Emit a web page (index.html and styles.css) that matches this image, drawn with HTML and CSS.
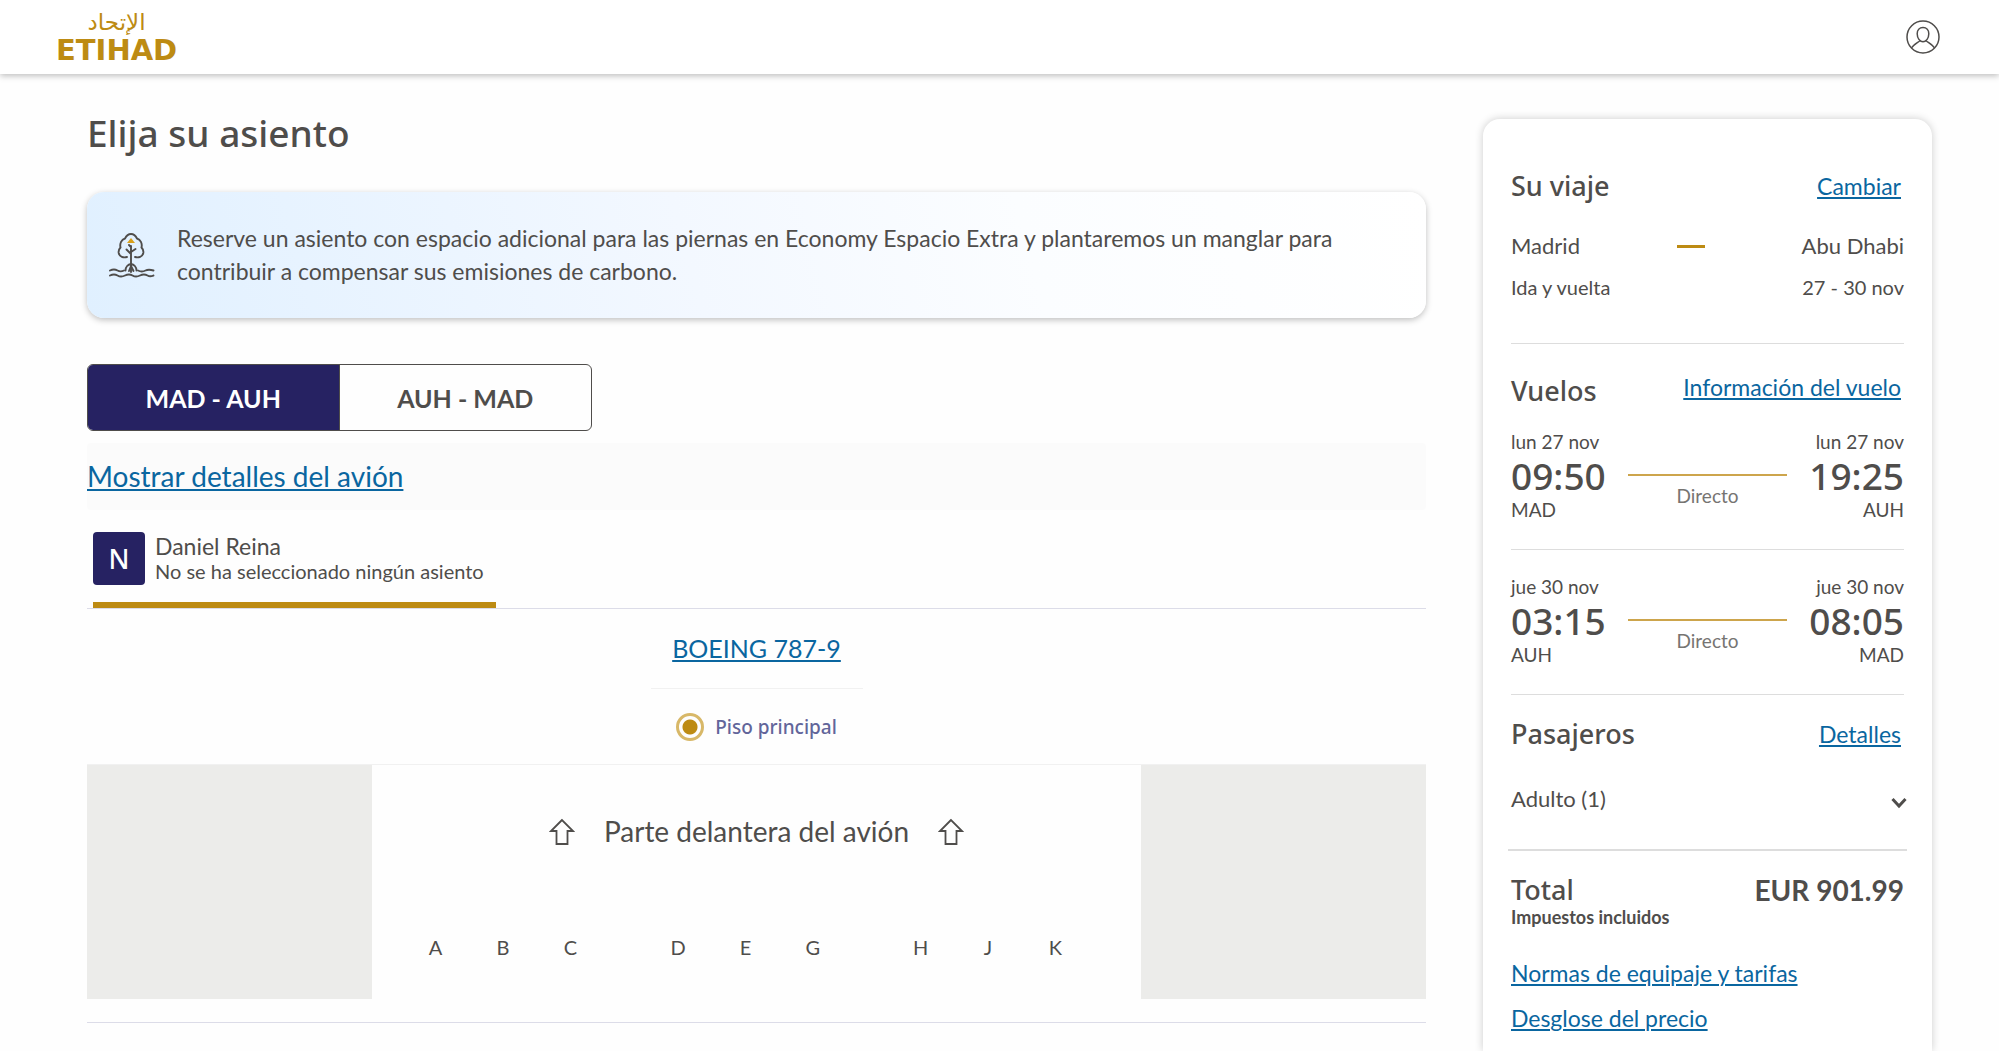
FILE: index.html
```html
<!DOCTYPE html>
<html lang="es">
<head>
<meta charset="utf-8">
<meta name="viewport" content="width=device-width, initial-scale=1">
<title>Elija su asiento | Etihad</title>
<link rel="stylesheet" href="styles.css">
</head>
<body>
<header class="topbar">
  <a class="logo" href="#" aria-label="Etihad">
    <span class="logo-ar" lang="ar" dir="rtl">الإتحاد</span>
    <span class="logo-en">ETIHAD</span>
  </a>
  <button class="account" type="button" aria-label="Mi cuenta">
    <svg width="34" height="34" viewBox="0 0 34 34" fill="none" stroke="currentColor" stroke-width="1.5" aria-hidden="true">
      <circle cx="17" cy="17" r="16"/>
      <path d="M17 7.5c-3.6 0-5.8 2.700-5.800 6.300 0 4.200 2.600 8 5.800 8s5.800-3.800 5.800-8c0-3.600-2.200-6.300-5.800-6.300z"/>
      <path d="M5.500 28c1.800-3.200 5.600-5 8.700-7.500M28.500 28c-1.800-3.200-5.600-5-8.700-7.500"/>
    </svg>
  </button>
</header>

<main class="page">
  <section class="seats">
    <h1 class="title">Elija su asiento</h1>

    <div class="banner">
      <svg class="banner-icon" width="46" height="46" viewBox="0 0 46 46" fill="none" stroke="#4f4d4b" stroke-width="1.900" stroke-linecap="round" aria-hidden="true">
        <path d="M18 25c-3.500 1-7.500 0-8.300-4-.4-2.500.8-4.500 1.800-5.500-1-4 1-8 4.500-9 1.500-3 4-4.500 6-4.500s4.500 1.500 6 4.500c3.500 1 5.500 5 4.500 9 1 1 2.200 3 1.800 5.500-.8 4-4.800 5-8.300 4"/>
        <path d="M22 40V14M22 22l-4.500-4.500M22 20l4.500-3M22 15l-2-2"/>
        <path d="M22 32c-3 .5-5.500 3-5.500 6.500M22 32c3 .5 5.500 3 5.500 6.500M22 34l-2 5M22 34l2.500 5"/>
        <path d="M1 38.500c3-1.500 5-1.500 7.500 0s4.500 1 6.500 0M29 38.500c3 1.500 5 1.300 7.500 0s5-1 8 0"/>
        <path d="M1 43.500c3-1.500 5-1.500 7.500 0s5 1.300 7.500 0 5-1.500 7.500 0 5 1.300 7.500 0 5-1.500 7.500 0 4 .8 6 0"/>
        <path d="M22 6l4 5h-8z" fill="#d9a11c" stroke="none"/>
      </svg>
      <p class="banner-text">Reserve un asiento con espacio adicional para las piernas en Economy Espacio Extra y plantaremos un manglar para contribuir a compensar sus emisiones de carbono.</p>
    </div>

    <div class="legs">
      <button class="leg leg-on" type="button" aria-pressed="true">MAD - AUH</button>
      <button class="leg" type="button" aria-pressed="false">AUH - MAD</button>
    </div>

    <div class="plane-details"><a class="link" href="#">Mostrar detalles del avión</a></div>

    <div class="passengers">
      <div class="passenger">
        <span class="avatar">N</span>
        <div>
          <div class="passenger-name">Daniel Reina</div>
          <div class="passenger-seat">No se ha seleccionado ningún asiento</div>
        </div>
      </div>
    </div>

    <div class="model"><a class="link" href="#">BOEING 787-9</a></div>
    <div class="deck">
      <input class="radio" type="radio" id="deck-main" name="deck" checked>
      <label for="deck-main">Piso principal</label>
    </div>

    <div class="cabin">
      <div class="cabin-map">
        <div class="front">
          <svg width="26" height="28" viewBox="0 0 26 28" fill="none" stroke="currentColor" stroke-width="1.800" aria-hidden="true"><path d="M13 2L2 13h5.500v13h11V13H24z"/></svg>
          <span>Parte delantera del avión</span>
          <svg width="26" height="28" viewBox="0 0 26 28" fill="none" stroke="currentColor" stroke-width="1.800" aria-hidden="true"><path d="M13 2L2 13h5.500v13h11V13H24z"/></svg>
        </div>
        <div class="letters">
          <span>A</span><span>B</span><span>C</span><i></i>
          <span>D</span><span>E</span><span>G</span><i></i>
          <span>H</span><span>J</span><span>K</span>
        </div>
      </div>
    </div>
  </section>

  <aside class="summary">
    <section class="block trip">
      <div class="head">
        <h2>Su viaje</h2>
        <a class="link" href="#">Cambiar</a>
      </div>
      <div class="cities"><span>Madrid</span><span class="dash"></span><span>Abu Dhabi</span></div>
      <div class="dates"><span>Ida y vuelta</span><span>27 - 30 nov</span></div>
    </section>

    <section class="block flights">
      <div class="head head-top">
        <h2>Vuelos</h2>
        <a class="link" href="#">Información del vuelo</a>
      </div>
      <div class="flight">
        <div><div>lun 27 nov</div><div class="time">09:50</div><div>MAD</div></div>
        <div class="route"><span class="route-line"></span><span>Directo</span></div>
        <div class="arrive"><div>lun 27 nov</div><div class="time">19:25</div><div>AUH</div></div>
      </div>
    </section>

    <section class="block second">
      <div class="flight">
        <div><div>jue 30 nov</div><div class="time">03:15</div><div>AUH</div></div>
        <div class="route"><span class="route-line"></span><span>Directo</span></div>
        <div class="arrive"><div>jue 30 nov</div><div class="time">08:05</div><div>MAD</div></div>
      </div>
    </section>

    <section class="travellers">
      <div class="head">
        <h2>Pasajeros</h2>
        <a class="link" href="#">Detalles</a>
      </div>
      <button class="adult" type="button" aria-expanded="false">
        <span>Adulto (1)</span>
        <svg width="16" height="20" viewBox="0 0 16 20" fill="none" stroke="currentColor" stroke-width="3" aria-hidden="true"><path d="M1.500 10L8 17l6.500-7"/></svg>
      </button>
    </section>

    <section class="total">
      <div class="total-row"><h2>Total</h2><strong>EUR 901.99</strong></div>
      <p class="taxes">Impuestos incluidos</p>
      <nav class="more">
        <a class="link" href="#">Normas de equipaje y tarifas</a>
        <a class="link" href="#">Desglose del precio</a>
      </nav>
    </section>
  </aside>
</main>
</body>
</html>
```
FILE: styles.css
```css
:root {
  --ink: #4f4d4b;
  --gold: #bd8b13;
  --navy: #262262;
  --blue: #0a66a0;
  --rule: #dddddd;
  --medium: "Noto Sans", "Open Sans", sans-serif;
}

* { box-sizing: border-box; }

body {
  margin: 0;
  background: #fefefe;
  color: var(--ink);
  font-family: Lato, "Open Sans", sans-serif;
  font-size: 23px;
  line-height: 28px;
}

h1, h2, p { margin: 0; font-weight: 500; }
h1, h2 { font-family: var(--medium); }
button { margin: 0; padding: 0; border: 0; background: none; color: inherit; font: inherit; cursor: pointer; }

.link {
  color: var(--blue);
  text-decoration: underline;
  text-decoration-thickness: 2px;
  text-underline-offset: 2px;
}

/* top bar */
.topbar {
  display: flex;
  align-items: center;
  justify-content: space-between;
  height: 74px;
  padding: 0 59px 0 56px;
  background: #fff;
  box-shadow: 0 2px 6px rgba(0, 0, 0, .25);
}
.logo {
  display: flex;
  flex-direction: column;
  align-items: center;
  color: var(--gold);
  font-family: "DejaVu Sans", sans-serif;
  text-decoration: none;
}
.logo-ar { font-size: 23px; line-height: 27px; }
.logo-en { font-size: 29px; font-weight: 700; line-height: 29px; }
.account { display: flex; }

/* page columns */
.page {
  display: grid;
  grid-template-columns: minmax(0, 1fr) 449px;
  gap: 57px;
  min-height: calc(100vh - 74px);
  padding: 35px 67px 0 87px;
}

.title { font-size: 37px; line-height: 48px; }

.banner {
  display: flex;
  align-items: center;
  gap: 22px;
  margin-top: 35px;
  padding: 30px 76px 30px 22px;
  border-radius: 17px;
  background: linear-gradient(75deg, #e0f0ff 0%, #f3f8ff 45%, #fbfdff 70%, #ffffff 100%);
  box-shadow: 0 2px 6px rgba(0, 0, 0, .25);
}
.banner-icon { flex: none; }
.banner-text { font-weight: 400; line-height: 33px; }

.legs {
  display: grid;
  grid-template-columns: 1fr 1fr;
  max-width: 505px;
  margin-top: 46px;
  border: 1px solid var(--ink);
  border-radius: 6px;
  overflow: hidden;
}
.leg { height: 65px; font-size: 25px; font-weight: 700; }
.leg-on { background: var(--navy); color: #fff; border-right: 1px solid var(--ink); }

.plane-details {
  margin-top: 12px;
  padding: 17px 0;
  border-radius: 4px;
  background: #fbfbfb;
  font-size: 28px;
  line-height: 33px;
}

.passengers {
  display: flex;
  margin-top: 22px;
  padding-left: 6px;
  border-bottom: 1px solid #dcdce8;
}
.passenger {
  display: flex;
  align-items: center;
  gap: 10px;
  min-width: 403px;
  padding-bottom: 17px;
  border-bottom: 6px solid var(--gold);
}
.avatar {
  display: grid;
  place-items: center;
  width: 52px;
  height: 53px;
  border-radius: 4px;
  background: var(--navy);
  color: #fff;
  font-family: var(--medium);
  font-size: 27px;
  font-weight: 500;
}
.passenger-name { line-height: 25px; }
.passenger-seat { font-size: 20px; line-height: 25px; }

.model {
  width: 212px;
  margin: 0 auto;
  padding: 25px 0 26px;
  border-bottom: 1px solid #f1f1f1;
  font-size: 25px;
  text-align: center;
}
.deck {
  display: flex;
  align-items: center;
  justify-content: center;
  gap: 11px;
  height: 76px;
  border-bottom: 1px solid #f1f1f1;
  color: #62659a;
  font-family: var(--medium);
  font-size: 19px;
  font-weight: 500;
}
.radio {
  appearance: none;
  width: 28px;
  height: 28px;
  margin: 0;
  border: 3px solid #d8b868;
  border-radius: 50%;
  background: radial-gradient(circle, var(--gold) 7px, transparent 8px);
}

.cabin {
  display: grid;
  grid-template-columns: 10fr 27fr 10fr;
  background: #ececea;
}
.cabin-map {
  grid-column: 2;
  padding: 50px 52px 39px 30px;
  background: #fefefe;
}
.front {
  display: flex;
  align-items: center;
  justify-content: center;
  gap: 29px;
  padding-left: 22px;
  font-size: 28px;
  line-height: 33px;
}
.letters {
  display: grid;
  grid-template-columns: repeat(3, 5fr) 3fr repeat(3, 5fr) 3fr repeat(3, 5fr);
  margin-top: 87px;
  font-size: 20px;
  line-height: 25px;
  text-align: center;
}
.seats::after {
  content: "";
  display: block;
  margin-top: 23px;
  border-top: 1px solid #dcdce8;
}

/* trip summary */
.summary {
  margin-top: 10px;
  padding: 51px 28px 17px;
  border-radius: 17px 17px 0 0;
  background: #fff;
  box-shadow: 0 0 8px rgba(0, 0, 0, .2);
}
.block { border-bottom: 1px solid var(--rule); }
.head { display: flex; align-items: center; justify-content: space-between; padding-right: 3px; }
.head-top { align-items: flex-start; }
.head-top .link { line-height: 24px; }
h2 { font-size: 27px; line-height: 32px; }

.trip { padding-bottom: 42px; }
.cities,
.dates { display: flex; align-items: center; justify-content: space-between; }
.cities { margin-top: 30px; font-size: 22px; }
.dash { width: 28px; height: 3px; background: var(--gold); }
.dates { margin-top: 13px; font-size: 20px; }

.flights { padding: 31px 0 25px; }
.flights .flight { margin-top: 21px; }
.second { padding: 23px 0 25px; }
.flight { display: flex; gap: 22px; font-size: 19px; }
.time { font-family: var(--medium); font-size: 37px; font-weight: 500; line-height: 40px; }
.arrive { text-align: right; }
.route {
  display: flex;
  flex: 1;
  flex-direction: column;
  gap: 6px;
  padding-top: 46px;
  color: #767472;
  font-size: 19px;
  text-align: center;
}
.route-line { height: 2px; background: #cda54c; }

.travellers {
  margin: 0 -3px;
  padding: 23px 0 36px;
  border-bottom: 2px solid var(--rule);
}
.travellers .head { padding: 0 6px 0 3px; }
.adult {
  display: flex;
  align-items: center;
  justify-content: space-between;
  width: 100%;
  margin-top: 35px;
  padding-left: 3px;
  font-size: 22px;
}

.total { padding-top: 23px; }
.total-row { display: flex; justify-content: space-between; font-size: 28px; line-height: 32px; }
.taxes { font-family: Lato, "Open Sans", sans-serif; font-size: 18px; font-weight: 700; line-height: 22px; }
.more { display: flex; flex-direction: column; align-items: flex-start; gap: 17px; margin-top: 31px; }

@media (max-width: 1200px) {
  .page { grid-template-columns: minmax(0, 1fr); padding: 36px 24px 0; }
}
```
